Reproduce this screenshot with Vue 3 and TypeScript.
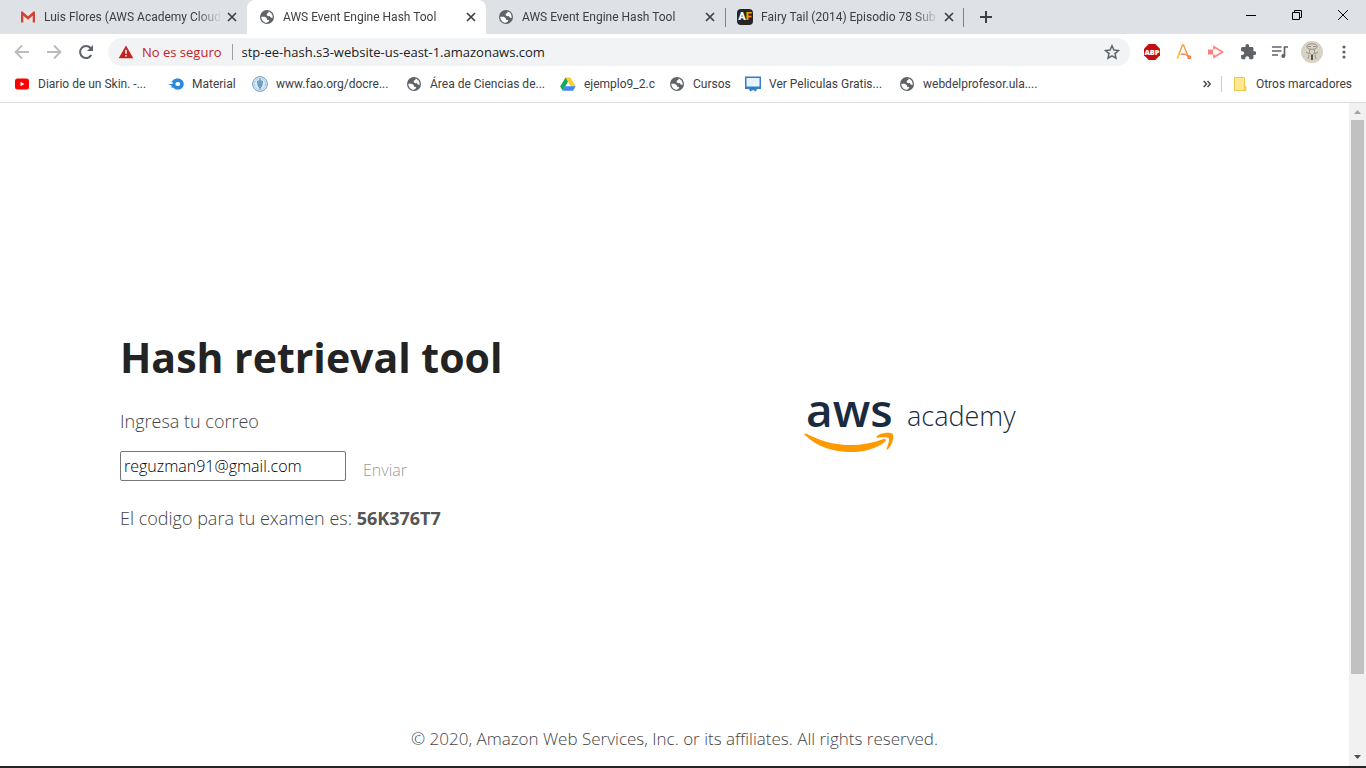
<script setup lang="ts">
import { ref } from 'vue'

interface Tab { title: string; icon: string; active?: boolean; divider?: boolean }
interface Bookmark { label: string; icon: string; width: number }

const tabs: Tab[] = [
  { title: 'Luis Flores (AWS Academy Cloud', icon: 'gmail' },
  { title: 'AWS Event Engine Hash Tool', icon: 'globe', active: true },
  { title: 'AWS Event Engine Hash Tool', icon: 'globe', divider: true },
  { title: 'Fairy Tail (2014) Episodio 78 Sub E', icon: 'af', divider: true },
]

const bookmarks: Bookmark[] = [
  { label: 'Diario de un Skin. -...', icon: 'youtube', width: 154 },
  { label: 'Material', icon: 'material', width: 84 },
  { label: 'www.fao.org/docre...', icon: 'fao', width: 154 },
  { label: 'Área de Ciencias de...', icon: 'globe', width: 154 },
  { label: 'ejemplo9_2.c', icon: 'drive', width: 109 },
  { label: 'Cursos', icon: 'globe', width: 76 },
  { label: 'Ver Peliculas Gratis...', icon: 'screen', width: 154 },
  { label: 'webdelprofesor.ula....', icon: 'globe', width: 154 },
]

const email = ref('reguzman91@gmail.com')
const address = ref('stp-ee-hash.s3-website-us-east-1.amazonaws.com')
const code = '56K376T7'
</script>

<template>
  <div class="window">
    <svg class="defs" aria-hidden="true">
      <symbol id="gmail" viewBox="0 0 16 16">
        <path d="M1 2.500h14v11H1z" fill="#e8e6e4" />
        <path d="M1 2.500h1.500L8 7.200l5.500-4.700H15v11h-2.300V6.800L8 10.800 3.300 6.800v6.700H1z" fill="#d54335" />
      </symbol>
      <symbol id="globe" viewBox="0 0 16 16">
        <circle cx="8" cy="8" r="7" fill="#5f6368" />
        <path d="M2.300 7.700l3.400.1 2 1.200.4 1.700 2.200.2-.5 1.500-2 1.400C4.700 13.500 2.300 11 2.300 7.700zM9.400 2.400l.1 1.400-1.700 1-.1 1.500 1.500.9 1.500-.2 1 1.400 1.900.6c.5-3.200-1.500-5.900-4.200-6.600z" fill="#fff" />
      </symbol>
      <symbol id="youtube" viewBox="0 0 16 16">
        <rect x="1" y="2.500" width="14" height="11" rx="2.500" fill="#f00" />
        <path d="M6.500 5.700L10.500 8l-4 2.300z" fill="#fff" />
      </symbol>
      <symbol id="material" viewBox="0 0 16 16">
        <path d="M0 8h4.500C5 4.500 7 2.500 10 2.500c3.200 0 5.700 2.400 5.700 5.500s-2.500 5.700-5.700 5.700c-2.200 0-3.500-.6-4.600-1.900l-2.900-.5 1.700-1.200z" fill="#2c87df" />
        <path d="M3 6.200l3-3 4-.7-3 3.700z" fill="#2c87df" />
        <ellipse cx="9.800" cy="8" rx="2.500" ry="2.100" fill="#fff" />
      </symbol>
      <symbol id="fao" viewBox="0 0 16 16">
        <circle cx="8" cy="8" r="7.400" fill="#dcebf5" stroke="#719fc3" />
        <circle cx="8" cy="8" r="5.500" fill="none" stroke="#97bad5" stroke-dasharray="2 1" />
        <path d="M8 2.500v11M5.500 5l.8 5L8 12l1.700-2 .8-5M7 4v6M9 4v6" fill="none" stroke="#4785b5" />
      </symbol>
      <symbol id="drive" viewBox="0 0 16 16">
        <path d="M5.500 1.500h5l5.200 8.800h-5z" fill="#fc3" />
        <path d="M5.500 1.500L.2 10.500l2.500 4.200L8 5.700z" fill="#11a861" />
        <path d="M5.200 10.300h10.500l-2.600 4.400H2.700z" fill="#4285f4" />
      </symbol>
      <symbol id="screen" viewBox="0 0 16 16">
        <path d="M0 .5h16v12.500h-4l-1 2.500-3-1.500-3 1.500L4 13H0z" fill="#357fc8" />
        <path d="M1.500 2h13v8.500h-13z" fill="#e7f4fc" />
      </symbol>
    </svg>

    <header class="tabstrip">
      <div class="tabs">
        <div v-for="(tab, i) in tabs" :key="i" class="tab" :class="{ active: tab.active, divider: tab.divider, last: i === tabs.length - 1 }">
          <span v-if="tab.icon === 'af'" class="af">A<i>F</i></span>
          <svg v-else class="icon"><use :href="'#' + tab.icon" /></svg>
          <span class="tab-title">{{ tab.title }}</span>
          <button class="close" type="button" aria-label="Cerrar pestaña">
            <svg width="10" height="10" viewBox="0 0 10 10"><path d="M1 1l8 8M9 1L1 9" stroke="#3c4043" stroke-width="1.700" /></svg>
          </button>
        </div>
        <button class="new-tab" type="button" aria-label="Nueva pestaña">
          <svg width="12" height="12" viewBox="0 0 12 12"><path d="M6 0v12M0 6h12" stroke="#3c4043" stroke-width="2" /></svg>
        </button>
      </div>
      <div class="win-controls">
        <button type="button" aria-label="Minimizar"><svg width="10" height="10" viewBox="0 0 10 10"><path d="M0 5.500h10" stroke="#000" /></svg></button>
        <button type="button" aria-label="Restaurar"><svg width="10" height="10" viewBox="0 0 10 10" fill="none" stroke="#000"><path d="M.5 2.500h7v7h-7zM2.500 2.500v-2h7v7h-2" /></svg></button>
        <button type="button" aria-label="Cerrar"><svg width="10" height="10" viewBox="0 0 10 10"><path d="M0 0l10 10M10 0L0 10" stroke="#000" /></svg></button>
      </div>
    </header>

    <div class="toolbar">
      <button type="button" aria-label="Atrás"><svg width="16" height="16" viewBox="0 0 16 16" fill="none" stroke="#babcbe" stroke-width="1.800"><path d="M15 8H2M8 1.500L1.500 8 8 14.500" /></svg></button>
      <button type="button" aria-label="Adelante"><svg width="16" height="16" viewBox="0 0 16 16" fill="none" stroke="#babcbe" stroke-width="1.800"><path d="M1 8h13M8 1.500L14.500 8 8 14.500" /></svg></button>
      <button type="button" aria-label="Recargar"><svg width="16" height="16" viewBox="0 0 16 16"><path d="M13.300 11A6 6 0 1 1 12.500 4" fill="none" stroke="#5f6368" stroke-width="2" /><path d="M15 1v6H9z" fill="#5f6368" /></svg></button>
      <div class="omnibox">
        <svg width="16" height="16" viewBox="0 0 16 16"><path d="M8 1.500l7.300 12.800H.7z" fill="#c5221f" /><path d="M8 5.800v4M8 11v1.600" stroke="#fff" stroke-width="1.500" /></svg>
        <span class="unsafe">No es seguro</span>
        <input v-model="address" class="address" type="text" aria-label="Dirección">
        <button class="star" type="button" aria-label="Añadir a marcadores"><svg width="16" height="16" viewBox="0 0 16 16"><path d="M8 1.800l1.900 4.300 4.600.4-3.500 3.100 1 4.600-4-2.400-4 2.400 1-4.600-3.500-3.100 4.600-.4z" fill="none" stroke="#5f6368" stroke-width="1.500" /></svg></button>
      </div>
      <div class="extensions">
        <button type="button" aria-label="Adblock Plus"><svg width="16" height="16" viewBox="0 0 16 16"><path d="M4.700 0h6.600L16 4.700v6.600L11.300 16H4.700L0 11.300V4.700z" fill="#c70d0d" /><text x="8" y="11" text-anchor="middle" font-family="Open Sans, sans-serif" font-weight="800" font-size="7.500" fill="#fff">ABP</text></svg></button>
        <button type="button" aria-label="Extensión A"><svg width="16" height="16" viewBox="0 0 16 16" fill="none" stroke-width="1.500"><path d="M1.300 14.500L6.500 1h1l4.800 11.500" stroke="#f5a04b" /><path d="M1.300 14.500L3 10" stroke="#ffd23f" /><path d="M4.500 10.500c3-1.300 5.500-.6 8 2" stroke="#f68b52" /><circle cx="13.300" cy="13.300" r="1.200" stroke="#f07643" /></svg></button>
        <button type="button" aria-label="Extensión de vídeo"><svg width="16" height="16" viewBox="0 0 16 16"><path d="M0 5.500h5v5H0z" fill="#ff7f7f" /><path d="M6 5.500V2.800L14.500 8 6 13.200v-2.700" fill="none" stroke="#ff8080" stroke-width="1.700" /></svg></button>
        <button type="button" aria-label="Extensiones"><svg width="16" height="16" viewBox="1 1 21 22"><path d="M20.500 11H19V7c0-1.100-.9-2-2-2h-4V3.500a2.500 2.500 0 0 0-5 0V5H4c-1.100 0-2 .9-2 2v3.800h1.500c1.500 0 2.700 1.200 2.700 2.700S5 16.200 3.500 16.200H2V20c0 1.100.9 2 2 2h3.800v-1.500c0-1.500 1.200-2.700 2.700-2.700s2.700 1.200 2.700 2.700V22H17c1.100 0 2-.9 2-2v-4h1.500a2.500 2.500 0 0 0 0-5z" fill="#5f6368" /></svg></button>
        <button type="button" aria-label="Contenido multimedia"><svg width="16" height="16" viewBox="0 0 16 16"><path d="M0 3h9.500M0 7h9.500M0 11h6M12.500 12V3H16" fill="none" stroke="#5f6368" stroke-width="1.700" /><circle cx="11.300" cy="12" r="2" fill="#5f6368" /></svg></button>
        <button class="avatar" type="button" aria-label="Perfil"><svg width="22" height="22" viewBox="0 0 22 22"><circle cx="11" cy="11" r="11" fill="#d8d2c5" /><g fill="none" stroke="#8a857b" stroke-width=".8"><ellipse cx="11" cy="5.500" rx="5" ry="2.700" /><path d="M9 8l-1 4 3 2 3-2-1-4M5 11l3 2M17 11l-3 2M8 14l-1 4M14 14l1 4M7 5.500h3M12 5.500h3" /></g><path d="M10 14h2v5h-2z" fill="#57544f" /></svg></button>
        <button type="button" aria-label="Menú"><svg width="16" height="16" viewBox="0 0 16 16" fill="#5f6368"><circle cx="8" cy="3" r="1.600" /><circle cx="8" cy="8" r="1.600" /><circle cx="8" cy="13" r="1.600" /></svg></button>
      </div>
    </div>

    <nav class="bookmarks" aria-label="Marcadores">
      <a v-for="mark in bookmarks" :key="mark.label" class="bookmark" href="#" :style="{ width: mark.width + 'px' }">
        <svg class="icon"><use :href="'#' + mark.icon" /></svg><span>{{ mark.label }}</span>
      </a>
      <div class="bookmarks-end">
        <button type="button" aria-label="Más marcadores"><svg width="8" height="8" viewBox="0 0 8 8"><path d="M.7 1l2.800 3L.7 7M4.500 1l2.800 3-2.800 3" fill="none" stroke="#4a4d51" stroke-width="1.500" /></svg></button>
        <a class="bookmark others" href="#">
          <svg class="icon" viewBox="0 0 16 16"><path d="M2.500 1.500h10v9h1.500v4H2.500z" fill="#ffe793" stroke="#e9c84d" /><path d="M12.500 10.500v4" stroke="#e9c84d" /></svg><span>Otros marcadores</span>
        </a>
      </div>
    </nav>

    <div class="viewport">
      <div class="page">
        <main class="content">
          <form class="tool" @submit.prevent>
            <h1>Hash retrieval tool</h1>
            <label for="email">Ingresa tu correo</label>
            <div class="row">
              <input id="email" v-model="email" class="email" type="email">
              <button class="send" type="submit">Enviar</button>
            </div>
            <p>El codigo para tu examen es: <b>{{ code }}</b></p>
          </form>
          <div class="brand">
            <svg width="240" height="90" viewBox="0 0 240 90" role="img" aria-label="aws academy">
              <text x="15" y="47" font-family="Open Sans, sans-serif" font-size="46" font-weight="600" fill="#182b3f">aws</text>
              <text x="116" y="46" font-family="Open Sans, sans-serif" font-size="27" font-weight="300" fill="#182b3f">academy</text>
              <path d="M14 55c-1.500-1-.2-2.200 1.500-1.300C38 66 66 69 92 59.300c2.500-.9 4 1 1.900 2.600C76 76 36 77 14 55z" fill="#f90" />
              <path d="M86 56c3-2.600 12-4.300 15.500-2.200 2.200 2.500-.4 11.500-4.300 15.200-1 .9-2 .5-1.500-.8 1-2.500 3.100-8 2.100-9.700-1.200-1.700-7.500-1.200-10.800-.8-1.500.1-2.200-.9-1-1.700z" fill="#f90" />
            </svg>
          </div>
        </main>
        <footer>© 2020, Amazon Web Services, Inc. or its affiliates. All rights reserved.</footer>
      </div>
      <div class="scrollbar" aria-hidden="true">
        <svg width="17" height="17" viewBox="0 0 17 17"><path d="M5 11l3.500-4L12 11z" fill="#a3a3a3" /></svg>
        <div class="track"><div class="thumb"></div></div>
        <svg width="17" height="17" viewBox="0 0 17 17"><path d="M5 6h7l-3.500 4z" fill="#505050" /></svg>
      </div>
    </div>
    <div class="taskbar"></div>
  </div>
</template>

<style>
body { margin: 0; background: #fff; }
</style>

<style scoped>
* { box-sizing: border-box; }
.window { display: flex; flex-direction: column; height: 100vh; overflow: hidden; font-family: Roboto, "Open Sans", sans-serif; font-size: 12px; color: #3c4043; }
.defs { position: absolute; width: 0; height: 0; }
button { display: flex; align-items: center; justify-content: center; border: 0; padding: 0; background: none; font: inherit; color: inherit; }
.icon { width: 16px; height: 16px; flex: none; }

.tabstrip { display: flex; justify-content: space-between; height: 34px; flex: none; background: #dee1e6; }
.tabs { display: flex; padding-left: 8px; }
.tab { display: flex; align-items: center; width: 239px; padding: 0 8px 0 12px; position: relative; }
.tab.active { background: #fff; border-radius: 8px 8px 0 0; }
.tab.divider + .tab.divider::before, .tab.last::after { content: ""; position: absolute; left: 0; top: 8px; width: 1px; height: 19px; background: #808387; }
.tab.last::after { left: auto; right: 0; }
.tab-title { flex: 1; margin-left: 8px; overflow: hidden; white-space: nowrap; line-height: 20px; -webkit-mask-image: linear-gradient(to right, #000 152px, transparent 178px); mask-image: linear-gradient(to right, #000 152px, transparent 178px); }
.af { display: flex; align-items: center; justify-content: center; width: 16px; height: 16px; flex: none; border-radius: 4px; background: #262626; color: #fff; font-size: 11px; line-height: 16px; font-weight: 900; }
.af i { color: #ff9800; font-style: normal; }
.close { width: 14px; height: 16px; margin-left: 4px; }
.new-tab { width: 44px; }
.win-controls { display: flex; height: 29px; }
.win-controls button { width: 46px; }

.toolbar { display: flex; align-items: center; height: 36px; flex: none; padding: 0 14px; gap: 16px; background: #fff; }
.toolbar button { flex: none; width: 16px; height: 28px; }
.omnibox { display: flex; align-items: center; flex: 1; height: 28px; margin-left: -2px; padding: 0 10px; border-radius: 14px; background: #f1f3f4; font-family: "Open Sans", "Noto Sans", sans-serif; font-size: 13px; }
.unsafe { margin-left: 8px; padding-right: 10px; border-right: 1px solid #9aa0a6; color: #c5221f; line-height: 16px; white-space: nowrap; }
.address { flex: 1; min-width: 0; border: 0; padding: 0 0 0 9px; background: none; outline: 0; font: inherit; color: #202124; }
.extensions { display: flex; align-items: center; gap: 16px; margin-left: -2px; }
.extensions .avatar { width: 22px; margin: 0 -3px; }

.bookmarks { display: flex; align-items: center; height: 33px; flex: none; padding: 0 14px 4px; border-bottom: 1px solid #dadce0; background: #fff; }
.bookmark { display: flex; align-items: center; gap: 8px; color: inherit; text-decoration: none; white-space: nowrap; }
.bookmarks-end { display: flex; align-items: center; margin-left: auto; }
.others { margin-left: 10px; padding-left: 10px; border-left: 1px solid #c9cccf; }

.viewport { display: flex; flex: 1; min-height: 0; font-family: "Open Sans", "Noto Sans", sans-serif; }
.page { display: flex; flex-direction: column; flex: 1; color: #444; font-size: 18px; font-weight: 300; }
.content { display: grid; grid-template-columns: 1fr 1fr; align-items: center; flex: 1; padding-top: 28px; }
.tool { padding-left: 120px; }
h1 { margin: 0 0 24px; font-size: 41px; line-height: 56px; font-weight: 700; color: #232323; }
label { display: block; line-height: 24px; }
.row { display: flex; align-items: flex-end; gap: 17px; margin: 18px 0 25px; }
.email { width: 226px; height: 30px; border: 1px solid #767676; border-radius: 2px; padding: 2px 3px; background: #fff; font: inherit; font-size: 16px; color: #000; }
.send { color: #999; font-size: 16px; line-height: 22px; }
p { margin: 0; line-height: 24px; }
b { font-weight: 700; color: #555; }
.brand { padding: 0 0 8px 116px; }
.brand svg { display: block; }
footer { padding: 0 0 15px; text-align: center; font-size: 17px; line-height: 24px; }
.scrollbar { display: flex; flex-direction: column; width: 17px; background: #f1f1f1; }
.track { flex: 1; padding: 0 2px; }
.thumb { height: 88%; background: #c1c1c1; }
.taskbar { height: 2px; flex: none; background: #252323; }
</style>
